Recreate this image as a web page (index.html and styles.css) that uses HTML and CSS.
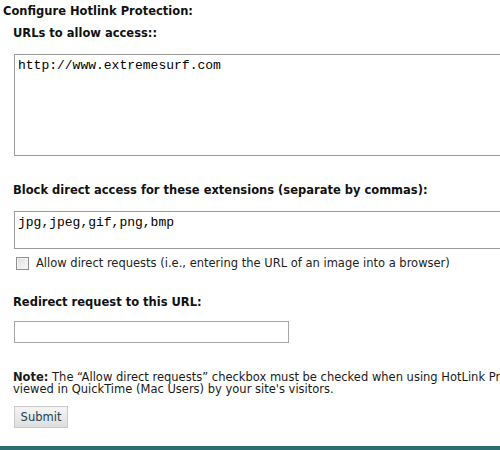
FILE: index.html
```html
<!DOCTYPE html>
<html>
<head>
<meta charset="utf-8">
<link rel="stylesheet" href="styles.css">
</head>
<body>
<div class="page">
  <h1 class="title">Configure Hotlink Protection:</h1>
  <form class="form">
    <h2 class="label">URLs to allow access::</h2>
    <textarea class="area area-big">http://www.extremesurf.com</textarea>
    <h2 class="label label-block">Block direct access for these extensions (separate by commas):</h2>
    <textarea class="area area-small">jpg,jpeg,gif,png,bmp</textarea>
    <label class="check-row"><span class="checkbox"></span><span>Allow direct requests (i.e., entering the URL of an image into a browser)</span></label>
    <h2 class="label label-redirect">Redirect request to this URL:</h2>
    <input class="url-input" type="text">
    <p class="note"><span class="note-line"><b>Note:</b> The “Allow direct requests” checkbox must be checked when using HotLink Protection with media files to be</span><span class="note-line">viewed in QuickTime (Mac Users) by your site's visitors.</span></p>
    <button class="submit" type="button">Submit</button>
  </form>
</div>
<div class="footer-bar"></div>
</body>
</html>
```

FILE: styles.css
```css
html, body {
  margin: 0;
  padding: 0;
  background: #fff;
  overflow: hidden;
}
body {
  width: 500px;
  height: 450px;
  position: relative;
  font-family: "DejaVu Sans", Verdana, sans-serif;
  font-size: 11.5px;
  color: #222;
}
.page {
  padding: 3px 0 0 3px;
  height: 443px;
  box-sizing: border-box;
  overflow: hidden;
}
.title {
  margin: 0;
  font-size: 11.5px;
  line-height: 16px;
  font-weight: bold;
  color: #111;
}
.form {
  padding-left: 10px;
  display: flex;
  flex-direction: column;
  align-items: flex-start;
}
.label {
  margin: 6px 0 0 0;
  font-size: 11.5px;
  line-height: 16px;
  font-weight: bold;
  color: #111;
}
.area {
  display: block;
  box-sizing: border-box;
  width: 560px;
  margin: 0 0 0 1px;
  padding: 3px 3px;
  border: 1px solid #9a9a9a;
  font-family: "Liberation Mono", "Courier New", monospace;
  font-size: 13px;
  line-height: 15px;
  color: #000;
  resize: none;
  background: #fff;
}
.area-big {
  margin-top: 13px;
  height: 102px;
}
.label-block {
  margin-top: 26px;
}
.area-small {
  margin-top: 13px;
  height: 38px;
}
.check-row {
  display: flex;
  align-items: center;
  gap: 7px;
  margin: 7px 0 0 3px;
  line-height: 14px;
}
.checkbox {
  width: 11px;
  height: 11px;
  border: 1px solid #8f8f8f;
  background: linear-gradient(135deg, #dcdcdc, #fbfbfb);
  box-shadow: inset 0 0 0 1px #f4f4f4;
}
.label-redirect {
  margin-top: 24px;
}
.url-input {
  display: block;
  box-sizing: border-box;
  margin: 11px 0 0 1px;
  width: 275px;
  height: 22px;
  border: 1px solid #a6a6a6;
  padding: 0 3px;
  background: #fff;
}
.note {
  margin: 28px 0 0 0;
  font-size: 11.5px;
  color: #1a1a1a;
  display: flex;
  flex-direction: column;
}
.note-line {
  display: block;
  line-height: 12px;
  white-space: nowrap;
}
.submit {
  margin: 11px 0 0 1px;
  width: 54px;
  height: 22px;
  padding: 0;
  font-family: "DejaVu Sans", Verdana, sans-serif;
  font-size: 11.5px;
  color: #23404f;
  border: 1px solid #c9c9c9;
  background: linear-gradient(#f5f5f5, #dedede);
}
.footer-bar {
  position: absolute;
  left: 0;
  right: 0;
  bottom: 0;
  height: 4px;
  background: #2b6f70;
}
```
